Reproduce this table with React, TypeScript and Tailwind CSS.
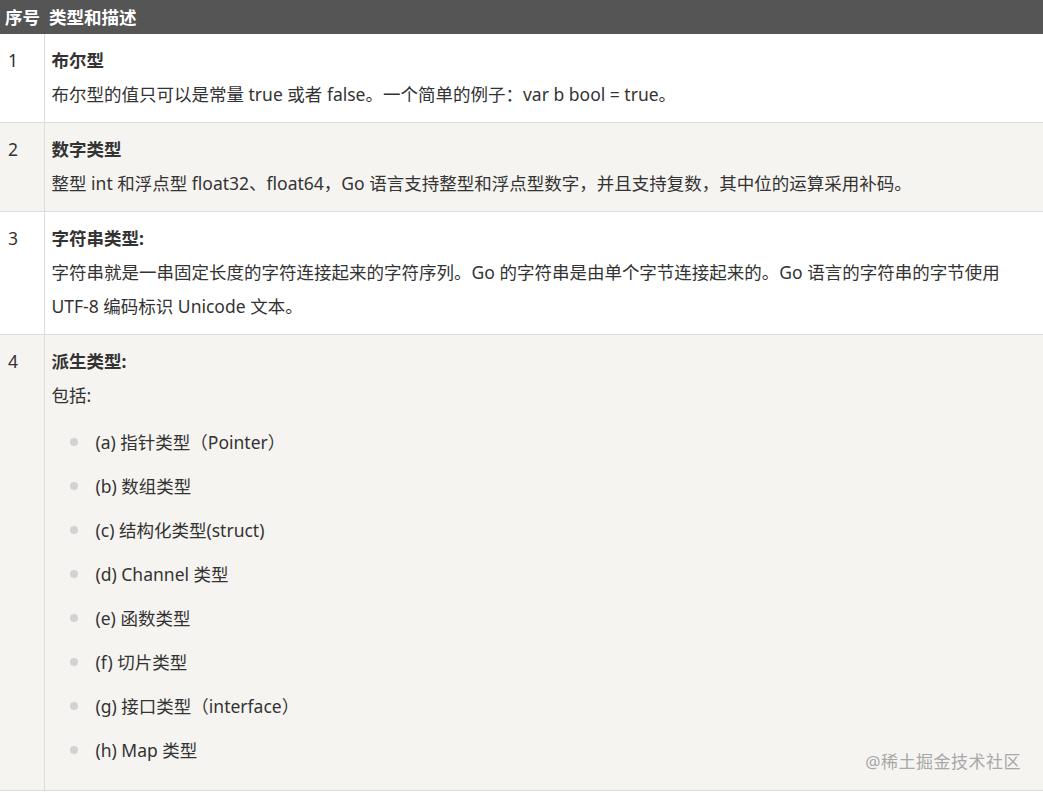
const FONT = "font-['Noto_Sans','Noto_Sans_CJK_SC',sans-serif]";

const SUBTYPES = [
  "(a) 指针类型（Pointer）",
  "(b) 数组类型",
  "(c) 结构化类型(struct)",
  "(d) Channel 类型",
  "(e) 函数类型",
  "(f) 切片类型",
  "(g) 接口类型（interface）",
  "(h) Map 类型",
];

function Row({ n, shaded, children }: { n: number; shaded?: boolean; children: React.ReactNode }) {
  return (
    <tr className={`border-b border-[#dcdcdc] ${shaded ? "bg-[#f6f4f0]" : "bg-white"}`}>
      <td className="w-[44px] border-r border-[#dcdcdc] pl-[8px] pt-[9px] pb-[11px] align-top leading-[34px]">
        {n}
      </td>
      <td className="pl-[7px] pr-2 pt-[9px] pb-[11px] align-top leading-[34px]">{children}</td>
    </tr>
  );
}

export default function App() {
  return (
    <div className={`relative w-[1043px] min-h-[793px] bg-white text-[17.5px] text-[#333333] ${FONT}`}>
      <table className="w-full border-collapse">
        <thead>
          <tr className="bg-[#555555] text-white">
            <th className="w-[44px] h-[34px] pl-[5px] text-left font-bold whitespace-nowrap">序号</th>
            <th className="h-[34px] pl-[5px] text-left font-bold">类型和描述</th>
          </tr>
        </thead>
        <tbody>
          <Row n={1}>
            <div className="font-bold">布尔型</div>
            <div>布尔型的值只可以是常量 true 或者 false。一个简单的例子：var b bool = true。</div>
          </Row>
          <Row n={2} shaded>
            <div className="font-bold">数字类型</div>
            <div>整型 int 和浮点型 float32、float64，Go 语言支持整型和浮点型数字，并且支持复数，其中位的运算采用补码。</div>
          </Row>
          <Row n={3}>
            <div className="font-bold">字符串类型:</div>
            <div className="pr-[10px]">
              字符串就是一串固定长度的字符连接起来的字符序列。Go 的字符串是由单个字节连接起来的。Go 语言的字符串的字节使用 UTF-8 编码标识 Unicode 文本。
            </div>
          </Row>
          <Row n={4} shaded>
            <div className="font-bold">派生类型:</div>
            <div>包括:</div>
            <ul className="mt-[8px] mb-[7px]">
              {SUBTYPES.map((s) => (
                <li key={s} className="flex items-center py-[5px] leading-[34px]">
                  <span className="ml-[18px] mr-[18px] h-[8px] w-[8px] rounded-full bg-[#d2d2d2]" />
                  <span>{s}</span>
                </li>
              ))}
            </ul>
          </Row>
        </tbody>
      </table>
      <div className="absolute right-[22px] top-[749px] text-[17px] text-[#a8a8a8] tracking-[0.5px]">
        @稀土掘金技术社区
      </div>
    </div>
  );
}
